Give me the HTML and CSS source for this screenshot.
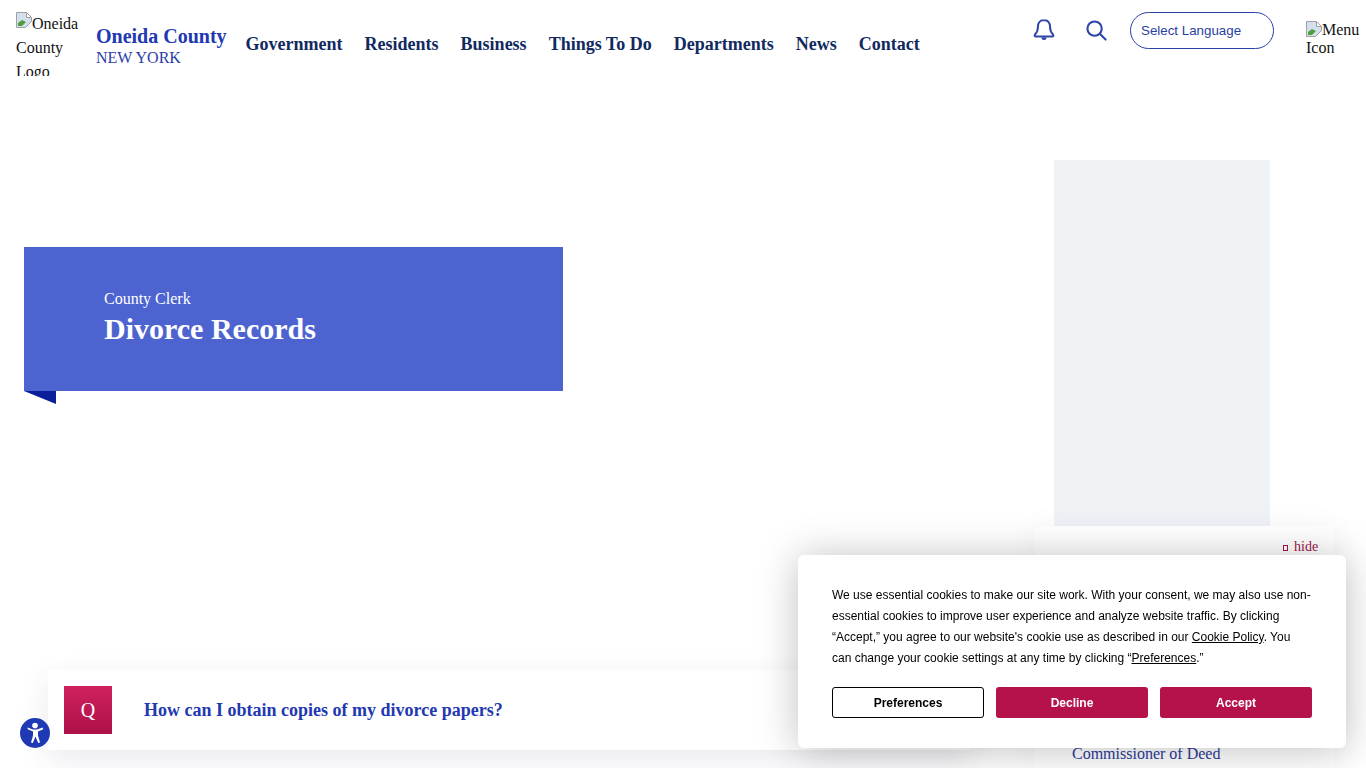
FILE: index.html
```html
<!DOCTYPE html>
<html lang="en">
<head>
	<meta charset="UTF-8">
	<title>Divorce Records</title>
	<link rel="stylesheet" href="styles.css">
</head>
<body>
	<header class="top">
		<div class="logo">
			<svg class="broken" viewBox="0 0 16 16"><path d="M.5.5h10l5 5v4l-6 6H.5z" fill="#d5e0ef" stroke="#a0a0a0"/><path d="M2 14v-3l4-3 4 2-4 4z" fill="#4f9e3f"/><path d="M10.500.5v5h5z" fill="#fff" stroke="#a0a0a0"/></svg>Oneida County Logo
		</div>
		<div class="brand">
			<div class="brand-name">Oneida County</div>
			<div class="brand-sub">NEW YORK</div>
		</div>
		<nav class="nav">
			<a>Government</a>
			<a>Residents</a>
			<a>Business</a>
			<a>Things To Do</a>
			<a>Departments</a>
			<a>News</a>
			<a>Contact</a>
		</nav>
		<div class="tools">
			<svg class="ico ico-bell" viewBox="0 0 22 24" fill="none" stroke="#2f45a8" stroke-width="2" stroke-linejoin="round"><path d="M11 2C7.200 2 5 4.800 5 8.500c0 3.500-1 6-3 8-.8.8-.3 2 .8 2h16.400c1.100 0 1.600-1.200.8-2-2-2-3-4.500-3-8C17 4.800 14.800 2 11 2z"/><path d="M9.500 19.500c0 2 3 2 3 0" fill="#2f45a8"/></svg>
			<svg class="ico ico-search" viewBox="0 0 22 22" fill="none" stroke="#2f45a8" stroke-width="2.200"><circle cx="9" cy="9" r="7.500"/><path d="M14.500 14.500l6 6" stroke-linecap="round"/></svg>
			<div class="lang">Select Language</div>
			<div class="menu-ico">
				<svg class="broken" viewBox="0 0 16 16"><path d="M.5.5h10l5 5v4l-6 6H.5z" fill="#d5e0ef" stroke="#a0a0a0"/><path d="M2 14v-3l4-3 4 2-4 4z" fill="#4f9e3f"/><path d="M10.500.5v5h5z" fill="#fff" stroke="#a0a0a0"/></svg>Menu Icon
			</div>
		</div>
	</header>

	<main class="layout">
		<section class="left">
			<div class="hero">
				<div class="hero-sub">County Clerk</div>
				<h1 class="hero-title">Divorce Records</h1>
				<span class="fold"></span>
			</div>
			<div class="question">
				<div class="q-box">Q</div>
				<h2 class="q-text">How can I obtain copies of my divorce papers?</h2>
			</div>
		</section>
		<aside class="side">
			<div class="side-img"></div>
			<div class="side-card">
				<a class="side-link">Commissioner of Deed</a>
			</div>
		</aside>
	</main>

	<a class="hide"><i class="tofu"></i>hide</a>

	<div class="a11y">
		<svg viewBox="0 0 30 30" width="30" height="30"><circle cx="15" cy="7.500" r="2.800" fill="#fff"/><path d="M7.500 9.500l5.500 2h4l5.500-2 .8 1.700-5.300 2.300v4l2 7-1.800.6-2.700-6.500-2.700 6.500-1.800-.6 2-7v-4l-5.300-2.300z" fill="#fff"/></svg>
	</div>

	<div class="cookie">
		<p class="cookie-text">We use essential cookies to make our site work. With your consent, we may also use non-essential cookies to improve user experience and analyze website traffic. By clicking “Accept,” you agree to our website's cookie use as described in our <a>Cookie Policy</a>. You can change your cookie settings at any time by clicking “<a>Preferences</a>.”</p>
		<div class="cookie-btns">
			<button class="btn btn-line">Preferences</button>
			<button class="btn">Decline</button>
			<button class="btn">Accept</button>
		</div>
	</div>
</body>
</html>
```

FILE: styles.css
```css
*{margin: 0;padding: 0;box-sizing: border-box;}
html,body{height: 768px;overflow: hidden;}
body{background: #fff;font-family: "Liberation Serif",serif;font-size: 16px;line-height: 24px;color: #111;}

.top{display: flex;align-items: center;height: 88px;padding-left: 16px;}
.logo{width: 64px;height: 64px;overflow: hidden;flex: none;}
.broken{width: 16px;height: 16px;vertical-align: 1px;}
.brand{margin-left: 16px;padding-top: 5px;flex: none;}
.brand-name{font-size: 20px;line-height: 22px;font-weight: bold;color: #2238b0;}
.brand-sub{font-size: 16px;line-height: 20px;margin-top: 1px;color: #2a3da8;}
.nav{display: flex;gap: 22px;margin-left: 19px;font-size: 18px;font-weight: bold;color: #11295f;}
.tools{display: flex;align-items: flex-start;margin-left: auto;height: 64px;}
.ico{flex: none;}
.ico-bell{width: 22px;height: 24px;margin: 6px 0 0 1px;}
.ico-search{width: 21px;height: 21px;margin: 8px 0 0 31px;}
.lang{width: 144px;height: 37px;margin-left: 23px;padding-left: 10px;border: 1px solid #2a3fa8;border-radius: 19px;font-family: "Liberation Sans",sans-serif;font-size: 13.33px;line-height: 35px;color: #2a3f9f;}
.menu-ico{width: 60px;margin: 9px 0 0 32px;line-height: 18px;}
.menu-ico .broken{vertical-align: -2px;}

.layout{display: grid;grid-template-columns: 1034px 300px;}
.left{padding: 159px 0 0 24px;}
.hero{position: relative;width: 539px;height: 144px;padding: 40px 0 0 80px;background: #4d63d0;color: #fff;}
.hero-sub{font-size: 16px;line-height: 24px;}
.hero-title{font-size: 30px;line-height: 36px;font-weight: bold;}
.fold{position: absolute;left: 0;top: 100%;width: 32px;height: 13px;background: #0b1f9a;clip-path: polygon(0 0,100% 0,100% 100%);}
.question{display: flex;align-items: center;width: 922px;height: 80px;margin: 279px 0 0 24px;padding-left: 16px;background: #fff;box-shadow: 0 10px 30px rgba(40,50,90,.1);}
.q-box{width: 48px;height: 48px;background: linear-gradient(#d0215d,#ad1149);color: #fff;font-size: 20px;line-height: 48px;text-align: center;}
.q-text{margin-left: 32px;font-size: 18px;font-weight: bold;color: #2238b0;}

.side{padding-top: 72px;}
.side-img{width: 216px;height: 366px;margin-left: 20px;background: #f0f3f6;}
.side-card{height: 242px;padding: 216px 0 0 38px;background: #fff;box-shadow: 0 0 30px rgba(40,50,90,.04);}
.side-link{color: #2a3a9a;}

.hide{position: absolute;left: 1283px;top: 538px;font-size: 14px;line-height: 18px;color: #a0134a;}
.tofu{display: inline-block;width: 5px;height: 6px;margin-right: 6px;border: 1px solid #a0134a;}
.a11y{position: fixed;left: 20px;top: 718px;width: 30px;height: 30px;border-radius: 50%;background: #1f39b4;}
.a11y svg{display: block;}

.cookie{position: fixed;left: 798px;top: 555px;width: 548px;height: 193px;padding: 30px 34px 0;background: #fff;border-radius: 6px;box-shadow: 0 2px 40px rgba(0,0,0,.25);font-family: "Liberation Sans",sans-serif;color: #000;}
.cookie-text{font-size: 12px;line-height: 21px;}
.cookie-text a{text-decoration: underline;}
.cookie-btns{display: flex;gap: 12px;margin-top: 18px;}
.btn{width: 152px;height: 31px;border: 0;border-radius: 3px;background: #b5124c;color: #fff;font-family: "Liberation Sans",sans-serif;font-size: 12px;font-weight: bold;}
.btn-line{background: #fff;border: 1px solid #000;color: #000;}
```
